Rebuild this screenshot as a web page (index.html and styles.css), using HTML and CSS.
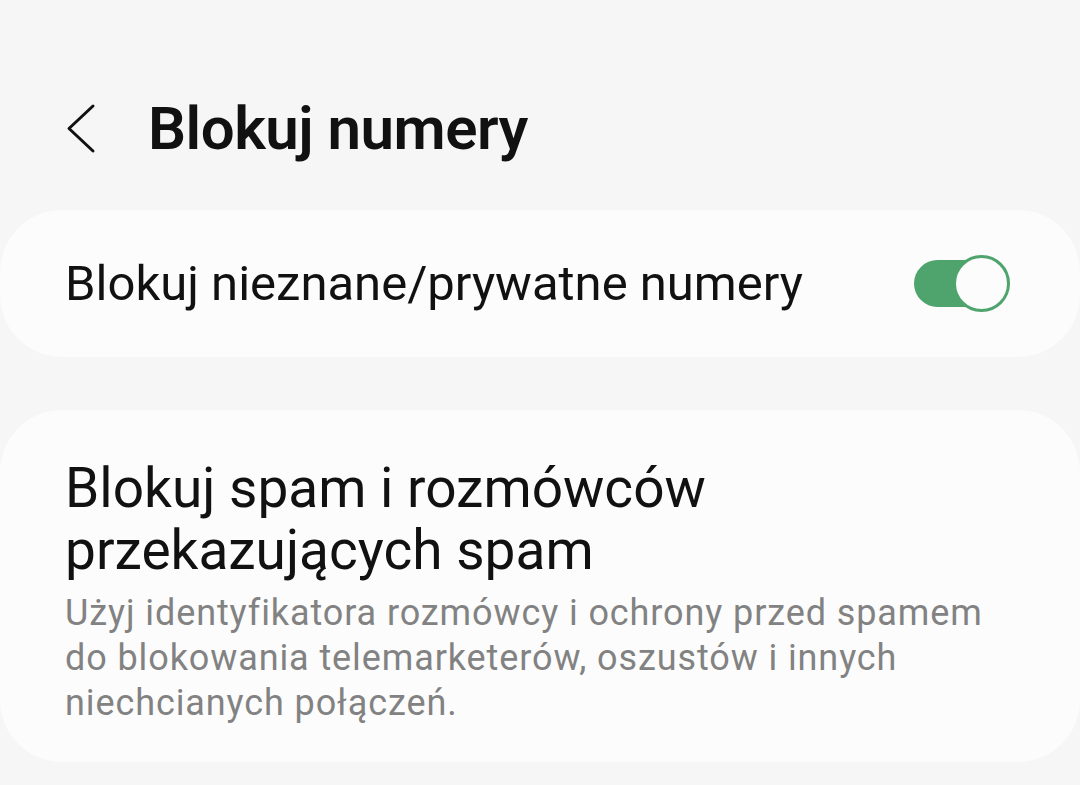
FILE: index.html
```html
<!DOCTYPE html>
<html lang="pl">
<head>
    <meta charset="UTF-8">
    <meta name="viewport" content="width=device-width, initial-scale=1.0">
    <title>Blokuj numery</title>
    <link rel="stylesheet" href="styles.css">
</head>
<body>
    <div class="header">
        <span class="back-btn">
            <svg width="30" height="52" viewBox="0 0 30 52">
                <path d="M27 3 L3 25.5 L27 48" fill="none" stroke="#111" stroke-width="3" stroke-linecap="round" stroke-linejoin="round"/>
            </svg>
        </span>
        <h1>Blokuj numery</h1>
    </div>

    <div class="card card-switch">
        <span class="item-title">Blokuj nieznane/prywatne numery</span>
        <span class="toggle on">
            <span class="toggle-thumb"></span>
        </span>
    </div>

    <div class="card card-text">
        <div class="item-title big">Blokuj spam i rozmówców<br>przekazujących spam</div>
        <div class="item-desc">Użyj identyfikatora rozmówcy i ochrony przed spamem do blokowania telemarketerów, oszustów i innych niechcianych połączeń.</div>
    </div>
</body>
</html>
```

FILE: styles.css
```css
body {
    margin: 0;
    background-color: #f6f6f6;
    font-family: Roboto, "Noto Sans", sans-serif;
    color: #111;
    width: 1080px;
    height: 785px;
    overflow: hidden;
}
.header {
    display: flex;
    align-items: center;
    padding: 98px 0 0 66px;
    height: 62px;
}
.back-btn {
    display: flex;
    width: 82px;
}
.header h1 {
    margin: 0;
    font-size: 60px;
    line-height: 62px;
    font-weight: 600;
    letter-spacing: -0.5px;
}
.card {
    background-color: #fcfcfc;
    border-radius: 62px;
}
.card-switch {
    margin-top: 50px;
    height: 147px;
    display: flex;
    align-items: center;
    justify-content: space-between;
    padding: 0 70px 0 65px;
}
.item-title {
    font-size: 49px;
    line-height: 60px;
}
.item-title.big {
    font-size: 55px;
    line-height: 62px;
}
.toggle {
    position: relative;
    width: 96px;
    height: 57px;
    display: flex;
    align-items: center;
}
.toggle::before {
    content: "";
    display: block;
    width: 76px;
    height: 47px;
    border-radius: 24px;
    background-color: #4ea46c;
}
.toggle-thumb {
    position: absolute;
    right: 0;
    top: 0;
    width: 51px;
    height: 51px;
    border-radius: 50%;
    border: 3px solid #4ea46c;
    background-color: #fcfcfc;
}
.card-text {
    margin-top: 53px;
    padding: 47px 70px 36px 65px;
}
.item-desc {
    margin-top: 10px;
    font-size: 36px;
    line-height: 45px;
    letter-spacing: 0.9px;
    color: #828282;
}
```
